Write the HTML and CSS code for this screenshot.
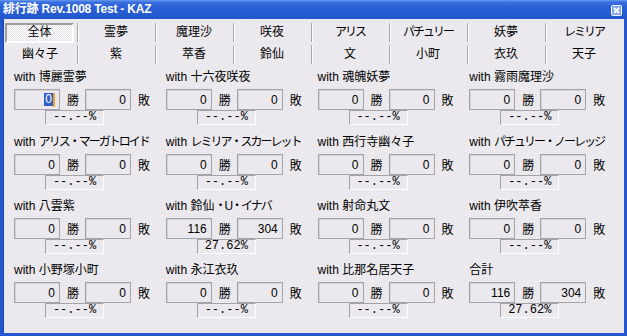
FILE: index.html
```html
<!DOCTYPE html>
<html lang="ja">

<head>
  <meta charset="UTF-8">
  <title>緋行跡 Rev.1008 Test - KAZ</title>
  <link rel="stylesheet" href="styles.css">
</head>

<body>
  <div class="window">
    <!-- タイトルバー -->
    <div class="titlebar">
      <span class="title">緋行跡 Rev.1008 Test - KAZ</span>
      <span class="close">
        <svg width="11" height="11" viewBox="0 0 11 11">
          <rect x="0.5" y="0.5" width="10" height="10" rx="1" fill="#7fa6f0" stroke="#fff" />
          <path d="M3 3 L8 8 M8 3 L3 8" stroke="#fff" stroke-width="2" />
        </svg>
      </span>
    </div>

    <div class="client">
      <!-- キャラ選択 -->
      <div class="tabs">
        <div class="tab"><span class="pressed">全体</span></div>
        <div class="tab">霊夢</div>
        <div class="tab">魔理沙</div>
        <div class="tab">咲夜</div>
        <div class="tab"><span class="kana">アリス</span></div>
        <div class="tab"><span class="kana">パチュリー</span></div>
        <div class="tab">妖夢</div>
        <div class="tab"><span class="kana">レミリア</span></div>
        <div class="tab">幽々子</div>
        <div class="tab">紫</div>
        <div class="tab">萃香</div>
        <div class="tab">鈴仙</div>
        <div class="tab">文</div>
        <div class="tab">小町</div>
        <div class="tab">衣玖</div>
        <div class="tab">天子</div>
      </div>

      <!-- 対戦成績 -->
      <div class="stats">
        <div class="cell">
          <div class="label">with 博麗霊夢</div>
          <div class="line">
            <span class="num"><span class="sel">0</span><span class="caret"></span></span><span class="unit">勝</span>
            <span class="num">0</span><span class="unit">敗</span>
          </div>
          <div class="rate">--.--%</div>
        </div>
        <div class="cell">
          <div class="label">with 十六夜咲夜</div>
          <div class="line">
            <span class="num">0</span><span class="unit">勝</span>
            <span class="num">0</span><span class="unit">敗</span>
          </div>
          <div class="rate">--.--%</div>
        </div>
        <div class="cell">
          <div class="label">with 魂魄妖夢</div>
          <div class="line">
            <span class="num">0</span><span class="unit">勝</span>
            <span class="num">0</span><span class="unit">敗</span>
          </div>
          <div class="rate">--.--%</div>
        </div>
        <div class="cell">
          <div class="label">with 霧雨魔理沙</div>
          <div class="line">
            <span class="num">0</span><span class="unit">勝</span>
            <span class="num">0</span><span class="unit">敗</span>
          </div>
          <div class="rate">--.--%</div>
        </div>

        <div class="cell">
          <div class="label">with <span class="kana">アリス・マーガトロイド</span></div>
          <div class="line">
            <span class="num">0</span><span class="unit">勝</span>
            <span class="num">0</span><span class="unit">敗</span>
          </div>
          <div class="rate">--.--%</div>
        </div>
        <div class="cell">
          <div class="label">with <span class="kana">レミリア・スカーレット</span></div>
          <div class="line">
            <span class="num">0</span><span class="unit">勝</span>
            <span class="num">0</span><span class="unit">敗</span>
          </div>
          <div class="rate">--.--%</div>
        </div>
        <div class="cell">
          <div class="label">with 西行寺幽々子</div>
          <div class="line">
            <span class="num">0</span><span class="unit">勝</span>
            <span class="num">0</span><span class="unit">敗</span>
          </div>
          <div class="rate">--.--%</div>
        </div>
        <div class="cell">
          <div class="label">with <span class="kana">パチュリー・ノーレッジ</span></div>
          <div class="line">
            <span class="num">0</span><span class="unit">勝</span>
            <span class="num">0</span><span class="unit">敗</span>
          </div>
          <div class="rate">--.--%</div>
        </div>

        <div class="cell">
          <div class="label">with 八雲紫</div>
          <div class="line">
            <span class="num">0</span><span class="unit">勝</span>
            <span class="num">0</span><span class="unit">敗</span>
          </div>
          <div class="rate">--.--%</div>
        </div>
        <div class="cell">
          <div class="label">with 鈴仙<span class="kana">・U・イナバ</span></div>
          <div class="line">
            <span class="num">116</span><span class="unit">勝</span>
            <span class="num">304</span><span class="unit">敗</span>
          </div>
          <div class="rate">27.62%</div>
        </div>
        <div class="cell">
          <div class="label">with 射命丸文</div>
          <div class="line">
            <span class="num">0</span><span class="unit">勝</span>
            <span class="num">0</span><span class="unit">敗</span>
          </div>
          <div class="rate">--.--%</div>
        </div>
        <div class="cell">
          <div class="label">with 伊吹萃香</div>
          <div class="line">
            <span class="num">0</span><span class="unit">勝</span>
            <span class="num">0</span><span class="unit">敗</span>
          </div>
          <div class="rate">--.--%</div>
        </div>

        <div class="cell">
          <div class="label">with 小野塚小町</div>
          <div class="line">
            <span class="num">0</span><span class="unit">勝</span>
            <span class="num">0</span><span class="unit">敗</span>
          </div>
          <div class="rate">--.--%</div>
        </div>
        <div class="cell">
          <div class="label">with 永江衣玖</div>
          <div class="line">
            <span class="num">0</span><span class="unit">勝</span>
            <span class="num">0</span><span class="unit">敗</span>
          </div>
          <div class="rate">--.--%</div>
        </div>
        <div class="cell">
          <div class="label">with 比那名居天子</div>
          <div class="line">
            <span class="num">0</span><span class="unit">勝</span>
            <span class="num">0</span><span class="unit">敗</span>
          </div>
          <div class="rate">--.--%</div>
        </div>
        <div class="cell">
          <div class="label">合計</div>
          <div class="line">
            <span class="num">116</span><span class="unit">勝</span>
            <span class="num">304</span><span class="unit">敗</span>
          </div>
          <div class="rate">27.62%</div>
        </div>
      </div>
    </div>
  </div>
</body>

</html>
```

FILE: styles.css
```css
* {
  margin: 0;
  padding: 0;
  box-sizing: border-box;
}

body {
  font-family: "Liberation Sans", "Noto Sans CJK JP", sans-serif;
  font-size: 12px;
  color: #000;
  background: #fff;
}

.window {
  width: 627px;
  height: 336px;
  display: flex;
  flex-direction: column;
  background-color: #ebe9ed;
}

/* タイトルバー */
.titlebar {
  height: 19px;
  display: flex;
  align-items: center;
  justify-content: space-between;
  padding: 0 5px 0 3px;
  background: linear-gradient(#6b9cf0 0, #3a70de 2px, #2a60d6 40%, #2256cc 100%);
}

.title {
  color: #fff;
  font-weight: bold;
  font-size: 12px;
  line-height: 19px;
  letter-spacing: -0.2px;
}

.close {
  display: flex;
  margin-top: 1px;
}

.client {
  flex: 1;
  border: 3px solid #2457cf;
  border-top: 0;
  box-shadow: inset 1px 0 #1a45b0;
}

/* カタカナは詰める */
.kana {
  letter-spacing: -2px;
}

/* キャラ選択ボタン */
.tabs {
  display: grid;
  grid-template-columns: 74px repeat(7, 78px);
  grid-auto-rows: 22px;
  padding-top: 2px;
}

.tab {
  position: relative;
  display: flex;
  align-items: center;
  justify-content: center;
  line-height: 19px;
}

.tab + .tab::before {
  content: "";
  position: absolute;
  left: 0;
  top: 2px;
  bottom: 1px;
  border-left: 1px solid #a9a8ac;
  box-shadow: 1px 0 #fff;
}

.tab:nth-child(9)::before {
  display: none;
}

.pressed {
  width: 69px;
  height: 20px;
  margin: 1px 3px 0 2px;
  display: flex;
  align-items: center;
  justify-content: center;
  border: 2px solid;
  border-color: #9d9ca0 #fff #fff #9d9ca0;
  background: repeating-conic-gradient(#fff 0 25%, #e4e2e6 0 50%) 0 0 / 2px 2px;
}

/* 成績 */
.stats {
  display: grid;
  grid-template-columns: repeat(4, 151.75px);
  grid-template-rows: 65px 64px 64px 64px;
  padding: 3px 0 0 11px;
}

.label {
  height: 18px;
  line-height: 18px;
  margin-bottom: 3px;
  white-space: nowrap;
}

.line {
  display: flex;
  align-items: center;
  height: 21px;
}

.num {
  width: 46px;
  height: 21px;
  display: flex;
  align-items: center;
  justify-content: flex-end;
  padding-right: 4px;
  border: 1px solid #a4a3a7;
  box-shadow: inset 1px 1px #d6d4d8;
}

.unit {
  width: 12px;
  margin: 0 6px 0 7px;
}

.sel {
  background-color: #2f5fc8;
  color: #fff;
  line-height: 13px;
  padding: 0 1px;
}

.caret {
  width: 2px;
  height: 14px;
  background-color: #f0a020;
}

.rate {
  width: 59px;
  height: 15px;
  margin-left: 31px;
  font-family: "Liberation Mono", monospace;
  font-size: 12px;
  line-height: 13px;
  text-align: center;
  border: 1px solid;
  border-color: #a4a3a7 #fff #fff #a4a3a7;
}
```
